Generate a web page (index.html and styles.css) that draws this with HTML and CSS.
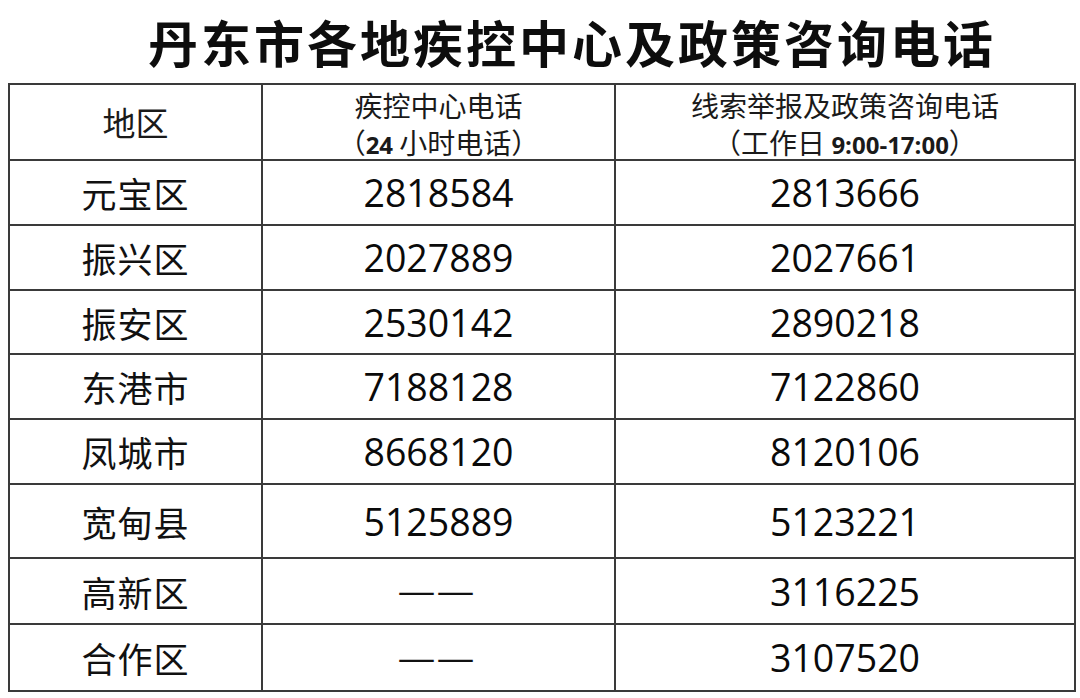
FILE: index.html
```html
<!DOCTYPE html>
<html lang="zh-CN">
<head>
<meta charset="utf-8">
<title>丹东市各地疾控中心及政策咨询电话</title>
<link rel="stylesheet" href="styles.css">
</head>
<body>
<h1 class="title">丹东市各地疾控中心及政策咨询电话</h1>
<table class="phones">
  <colgroup>
    <col class="c-area">
    <col class="c-cdc">
    <col class="c-policy">
  </colgroup>
  <thead>
    <tr class="head">
      <th class="area-h">地区</th>
      <th><div class="h1">疾控中心电话</div><div class="h2">（<b>24</b> 小时电话）</div></th>
      <th><div class="h1">线索举报及政策咨询电话</div><div class="h2">（工作日 <b>9:00-17:00</b>）</div></th>
    </tr>
  </thead>
  <tbody>
    <tr class="r65"><td class="area">元宝区</td><td class="num">2818584</td><td class="num">2813666</td></tr>
    <tr class="r65"><td class="area">振兴区</td><td class="num">2027889</td><td class="num">2027661</td></tr>
    <tr class="r64"><td class="area">振安区</td><td class="num">2530142</td><td class="num">2890218</td></tr>
    <tr class="r65"><td class="area">东港市</td><td class="num">7188128</td><td class="num">7122860</td></tr>
    <tr class="r65"><td class="area">凤城市</td><td class="num">8668120</td><td class="num">8120106</td></tr>
    <tr class="r74"><td class="area">宽甸县</td><td class="num">5125889</td><td class="num">5123221</td></tr>
    <tr class="r66"><td class="area">高新区</td><td class="dash">——</td><td class="num">3116225</td></tr>
    <tr class="r67"><td class="area">合作区</td><td class="dash">——</td><td class="num">3107520</td></tr>
  </tbody>
</table>
</body>
</html>
```
FILE: styles.css
```css
html, body {
  margin: 0;
  padding: 0;
  background: #ffffff;
}
body {
  width: 1080px;
  height: 698px;
  overflow: hidden;
  color: #111111;
  font-family: "Noto Sans CJK SC", "Noto Sans", sans-serif;
}
.title {
  margin: 0;
  height: 83px;
  box-sizing: border-box;
  padding-left: 64px;
  text-align: center;
  font-size: 50px;
  line-height: 83px;
  font-weight: 700;
  letter-spacing: 3px;
  color: #0d0d0d;
}
.phones {
  margin: 0 0 0 8px;
  width: 1066px;
  border-collapse: collapse;
  table-layout: fixed;
}
.c-area { width: 253px; }
.c-cdc { width: 353px; }
.c-policy { width: 460px; }
.phones th,
.phones td {
  border: 2px solid #3a3a3a;
  padding: 0;
  text-align: center;
  vertical-align: middle;
}
.head { height: 75px; }
.phones th {
  font-weight: 400;
  font-size: 28px;
  line-height: 36px;
  color: #1a1a1a;
}
.phones .area-h { font-size: 33px; }
.h1 {
  height: 40px;
  line-height: 40px;
  white-space: nowrap;
}
.h2 {
  height: 34px;
  line-height: 34px;
  white-space: nowrap;
}
.h2 b {
  font-family: "Open Sans", "Liberation Sans", sans-serif;
  font-weight: 700;
  font-size: 24px;
}
.area {
  font-size: 35px;
  font-weight: 400;
  letter-spacing: 1px;
}
.num {
  font-family: "Open Sans", "Liberation Sans", sans-serif;
  font-size: 37.5px;
  font-weight: 400;
  color: #0a0a0a;
}
.dash {
  font-family: "Liberation Serif", serif;
  font-size: 34px;
  letter-spacing: 5px;
  padding-left: 5px;
  font-weight: 700;
}
.r64 { height: 64px; }
.r65 { height: 65px; }
.r66 { height: 66px; }
.r67 { height: 67px; }
.r74 { height: 74px; }
```
